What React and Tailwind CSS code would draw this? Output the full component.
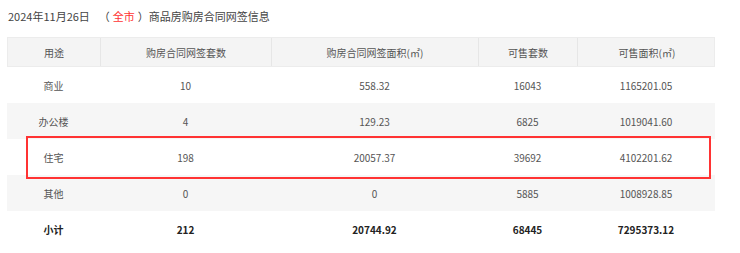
const cols = 'grid grid-cols-[93px_171px_207px_99px_138px]'

const rows = [
  { name: '商业', count: '10', area: '558.32', sale: '16043', saleArea: '1165201.05', gray: false },
  { name: '办公楼', count: '4', area: '129.23', sale: '6825', saleArea: '1019041.60', gray: true },
  { name: '住宅', count: '198', area: '20057.37', sale: '39692', saleArea: '4102201.62', gray: false },
  { name: '其他', count: '0', area: '0', sale: '5885', saleArea: '1008928.85', gray: true },
]

export default function App() {
  return (
    <div
      className="h-[253px] w-[740px] bg-white text-[#333]"
      style={{ fontFamily: '"Noto Sans CJK SC", "Noto Sans", sans-serif' }}
    >
      <p className="pl-[8px] pt-[9px] text-[11px] leading-[14px] text-[#444]">
        2024年11月26日
        <span className="ml-[9px]">（</span>
        <span className="mx-[3px] text-[#f33]">全市</span>
        <span>）商品房购房合同网签信息</span>
      </p>

      <div className="relative ml-[7px] mt-[14px] w-[708px] text-[10px]">
        {/* 表头 */}
        <div className={`${cols} h-[30px] border border-[#ececec] bg-[#f4f4f4] text-[#555]`}>
          <div className="flex items-center justify-center border-r border-[#e6e6e6]">用途</div>
          <div className="flex items-center justify-center border-r border-[#e6e6e6]">购房合同网签套数</div>
          <div className="flex items-center justify-center border-r border-[#e6e6e6]">购房合同网签面积(㎡)</div>
          <div className="flex items-center justify-center border-r border-[#e6e6e6]">可售套数</div>
          <div className="flex items-center justify-center">可售面积(㎡)</div>
        </div>

        {rows.map((r) => (
          <div key={r.name} className={`${cols} h-[36px] text-[#555] ${r.gray ? 'bg-[#f6f6f6]' : 'bg-white'}`}>
            <div className="flex items-center justify-center">{r.name}</div>
            <div className="flex items-center justify-center">{r.count}</div>
            <div className="flex items-center justify-center">{r.area}</div>
            <div className="flex items-center justify-center">{r.sale}</div>
            <div className="flex items-center justify-center">{r.saleArea}</div>
          </div>
        ))}

        {/* 小计 */}
        <div className={`${cols} h-[36px] font-bold text-[#222]`}>
          <div className="flex items-center justify-center">小计</div>
          <div className="flex items-center justify-center">212</div>
          <div className="flex items-center justify-center">20744.92</div>
          <div className="flex items-center justify-center">68445</div>
          <div className="flex items-center justify-center">7295373.12</div>
        </div>

        {/* 住宅行的红色标注框 */}
        <div className="pointer-events-none absolute left-[19px] top-[99px] h-[43px] w-[685px] border-2 border-[#f33]" />
      </div>
    </div>
  )
}
